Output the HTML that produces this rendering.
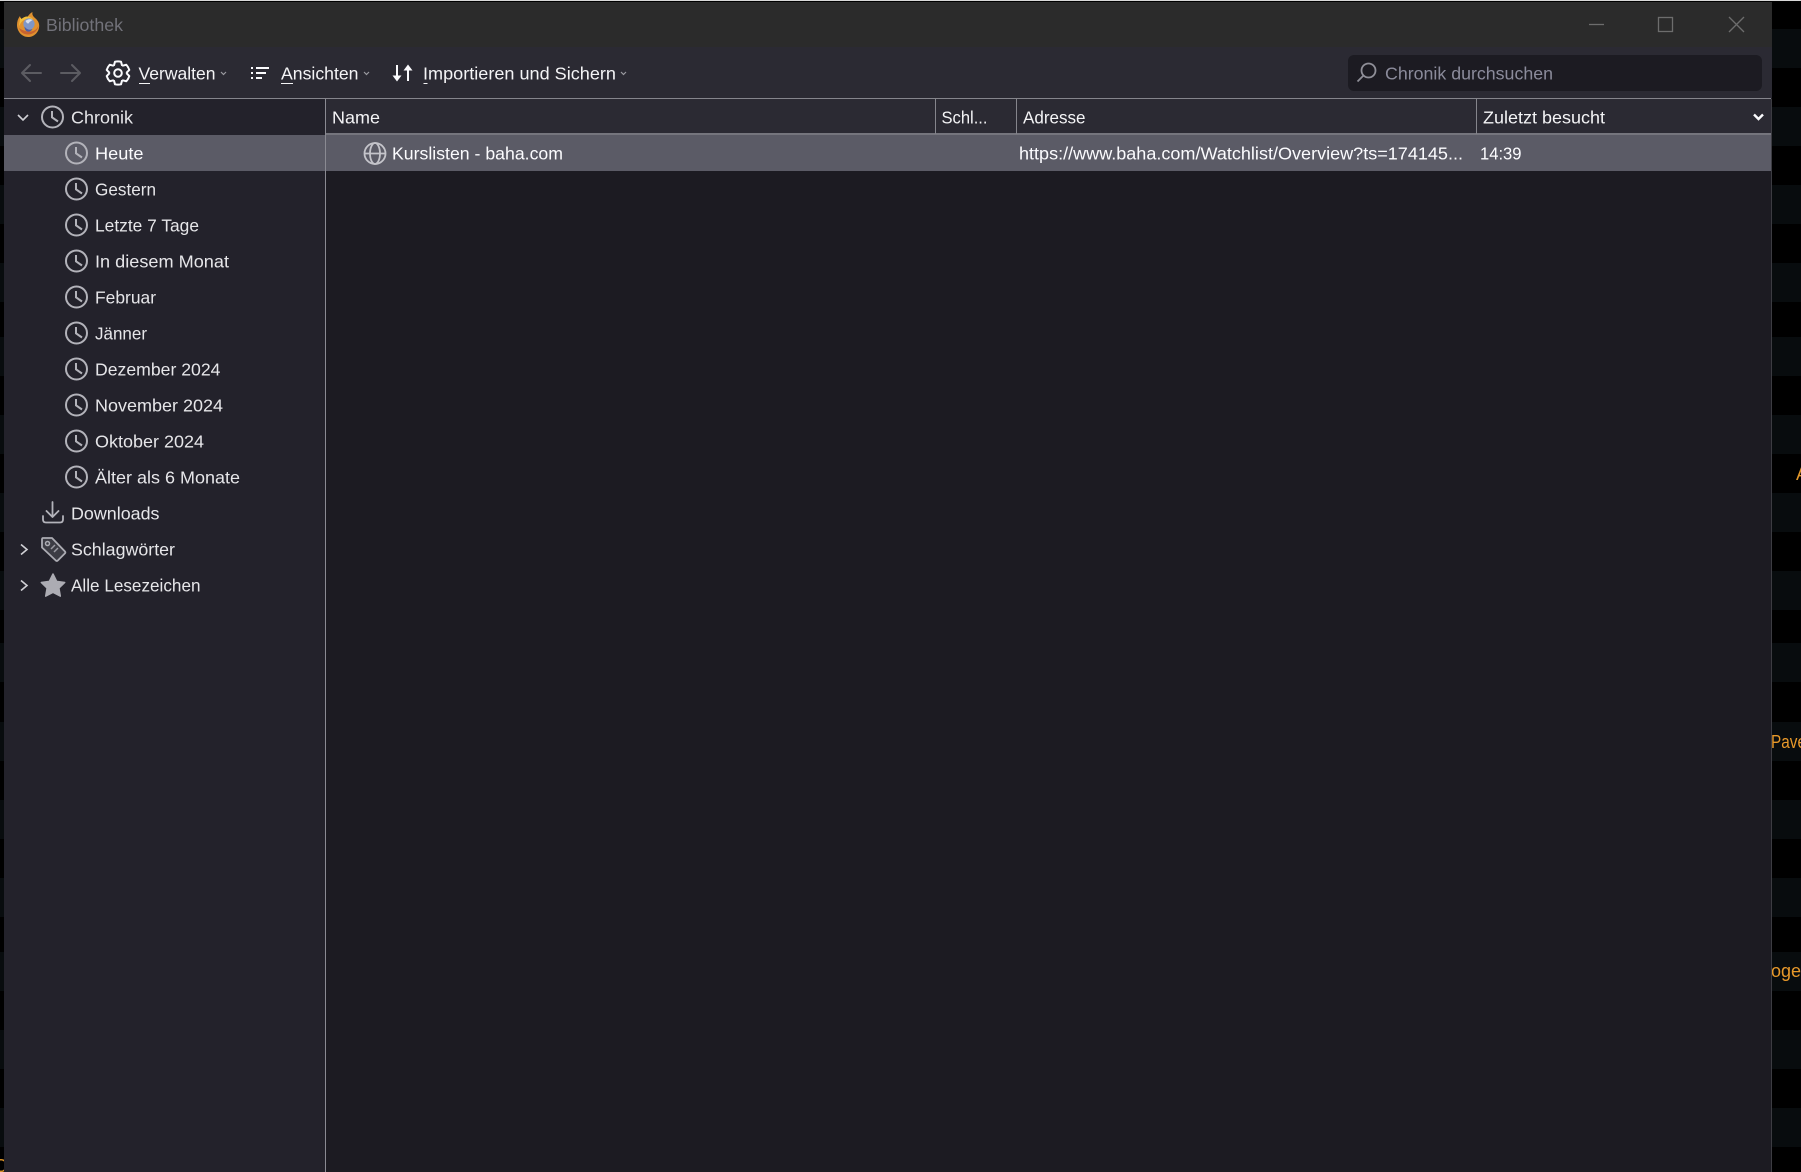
<!DOCTYPE html>
<html><head><meta charset="utf-8"><title>Bibliothek</title>
<style>
html,body{margin:0;padding:0;background:#000;width:1801px;height:1172px;overflow:hidden}
svg{display:block;position:absolute;left:0;top:0}
text{font-family:"Liberation Sans",sans-serif;font-size:17.5px;fill:#f4f4f6;white-space:pre}
.s{fill:#e6e6e9}
.c circle,.c path{fill:none;stroke:#b3b3ba;stroke-width:2}
</style></head><body>
<svg width="1801" height="1172" viewBox="0 0 1801 1172" xmlns="http://www.w3.org/2000/svg">
<defs>
<g id="clk" class="c"><circle cx="0" cy="0" r="10.5"/><path d="M-.5 -6V.3L5.5 4.5"/></g>
</defs>
<!-- background stripes -->
<rect width="1801" height="1172" fill="#000"/>
<g fill="#080c0e">
<rect y="29" width="1801" height="39"/><rect y="107" width="1801" height="39"/><rect y="185" width="1801" height="39"/><rect y="263" width="1801" height="39"/><rect y="337" width="1801" height="39"/><rect y="415" width="1801" height="39"/><rect y="493" width="1801" height="39"/><rect y="571" width="1801" height="39"/><rect y="643" width="1801" height="39"/><rect y="722" width="1801" height="39"/><rect y="800" width="1801" height="39"/><rect y="878" width="1801" height="39"/><rect y="952" width="1801" height="39"/><rect y="1030" width="1801" height="39"/><rect y="1108" width="1801" height="39"/>
</g>
<rect width="1801" height="1" fill="#d8d8d8"/>
<g>
<text x="1796" y="480" style="fill:#e0962a;font-size:18px">A</text>
<text x="1771" y="748" textLength="35" lengthAdjust="spacingAndGlyphs" style="fill:#e8992a;font-size:18px">Pave</text>
<text x="1771" y="977" style="fill:#e8992a;font-size:18px">oge</text>
<text x="-6" y="1172" style="fill:#e0962a;font-size:18px">O</text>
</g>
<!-- window -->
<rect x="4" y="2" width="1768" height="1170" fill="#1c1b22"/>
<rect x="4" y="2" width="1768" height="45" fill="#2b2b2b"/>
<rect x="4" y="47" width="1768" height="51" fill="#2b2a33"/>
<rect x="4" y="98" width="1767" height="1" fill="#85858c"/>
<rect x="4" y="99" width="321" height="1073" fill="#23222b"/>
<rect x="325" y="99" width="1" height="1073" fill="#8a8a92"/>
<rect x="1771" y="99" width="1" height="1073" fill="#3c3c42"/>
<!-- header -->
<rect x="326" y="99" width="1445" height="35" fill="#2b2a33"/>
<rect x="326" y="133" width="1445" height="2" fill="#75757d"/>
<rect x="935" y="99" width="1" height="35" fill="#85858c"/>
<rect x="1016" y="99" width="1" height="35" fill="#85858c"/>
<rect x="1476" y="99" width="1" height="35" fill="#85858c"/>
<!-- selection -->
<rect x="4" y="135" width="321" height="36" fill="#5b5b66"/>
<rect x="326" y="135" width="1445" height="36" fill="#5b5b66"/>
<!-- titlebar -->
<g>
<path d="M17 25c0-3.500 1-6.500 3-9 .2 1.500.8 2.500 1.800 3 1.700-1.600 3.800-2.400 6-2.500 1-1.700 2.700-3.500 4.700-4.500-.5 2.200.2 3.800 1.700 5.200 3 2.500 5 5 5 8.500 0 6.500-5.200 11.300-11.200 11.300S17 31.500 17 25z" fill="#e0912f"/>
<path d="M19 28c1.200 4 4.500 6.500 9 6.500 5 0 9.500-3.300 10.500-8.500-2 4-6 6.300-10.500 5.500-4-.6-6.500-1.800-9-3.500z" fill="#c8632f"/>
<path d="M20 17.500c.2 3-1 6-1 9 1-3 3-5.500 5-6.500 3-1.500 7-1.500 9.500 0-1.500-2.500-4-3.500-6-3.500-2.500 0-4.500 1-6 2.500z" fill="#f0bf3c"/>
<circle cx="29" cy="24" r="5.600" fill="#7f97c8"/>
<path d="M25.500 21c2-2 5-2.300 7-1-1 1-3 1.500-3.500 3-1 1-2 .5-3.500-2z" fill="#d7dfee"/>
<path d="M24.500 26.500c2 3 5 4 8 2.500-1 2-3 3-5 2.500-2-.5-3-2.500-3-5z" fill="#4d5ea6"/>
</g>
<text x="46" y="31" textLength="77" lengthAdjust="spacingAndGlyphs" style="fill:#72727a">Bibliothek</text>
<g fill="none" stroke="#6d6d6d" stroke-width="1.300">
<path d="M1589 24.500h15"/>
<rect x="1658.500" y="17.500" width="14" height="14"/>
<path d="M1729 17l15 15M1744 17l-15 15"/>
</g>
<!-- toolbar -->
<g fill="none" stroke="#5c5c62" stroke-width="2" stroke-linecap="round" stroke-linejoin="round">
<path d="M22 73h19M30 65l-8 8 8 8"/>
<path d="M61 73h19M72 65l8 8-8 8"/>
</g>
<g transform="translate(118 73)" fill="none" stroke="#fbfbfe" stroke-width="2" stroke-linejoin="round">
<circle r="3.800"/>
<path d="M-4.150-7.190L-3-11.300Q0-12 3-11.300L4.150-7.190"/>
<path d="M-4.150-7.190L-3-11.300Q0-12 3-11.300L4.150-7.190" transform="rotate(60)"/>
<path d="M-4.150-7.190L-3-11.300Q0-12 3-11.300L4.150-7.190" transform="rotate(120)"/>
<path d="M-4.150-7.190L-3-11.300Q0-12 3-11.300L4.150-7.190" transform="rotate(180)"/>
<path d="M-4.150-7.190L-3-11.300Q0-12 3-11.300L4.150-7.190" transform="rotate(240)"/>
<path d="M-4.150-7.190L-3-11.300Q0-12 3-11.300L4.150-7.190" transform="rotate(300)"/>
</g>
<text x="138.500" y="79.500" textLength="77" lengthAdjust="spacingAndGlyphs">Verwalten</text>
<rect x="139" y="83" width="11" height="1" fill="#f4f4f6"/>
<path d="M221 72l2.500 2.500 2.500-2.500M364 72l2.500 2.500 2.500-2.500M621 72l2.500 2.500 2.500-2.500" fill="none" stroke="#9a9aa0" stroke-width="1.200"/>
<g fill="#fbfbfe">
<rect x="251" y="67" width="2" height="2"/><rect x="251" y="72" width="2" height="2"/><rect x="251" y="77" width="2" height="2"/>
<rect x="256" y="67" width="13" height="2"/><rect x="256" y="72" width="10" height="2"/><rect x="256" y="77" width="6" height="2"/>
</g>
<text x="281" y="79.500" textLength="77.500" lengthAdjust="spacingAndGlyphs">Ansichten</text>
<rect x="281" y="83" width="12" height="1" fill="#f4f4f6"/>
<g fill="#fbfbfe">
<rect x="396" y="65" width="2" height="13"/><path d="M392.500 75.500h9L397 81.500z"/>
<rect x="407" y="68" width="2" height="13"/><path d="M403.500 70.500h9L408 64.500z"/>
</g>
<text x="423" y="79.500" textLength="193" lengthAdjust="spacingAndGlyphs">Importieren und Sichern</text>
<rect x="423.500" y="83" width="4" height="1" fill="#f4f4f6"/>
<!-- search -->
<rect x="1348" y="55" width="414" height="36" rx="6" fill="#1c1b22"/>
<g fill="none" stroke="#8f8f98" stroke-width="1.800"><circle cx="1368.500" cy="70.500" r="7"/><path d="M1363.500 75.500l-6 6"/></g>
<text x="1385" y="79.500" textLength="168" lengthAdjust="spacingAndGlyphs" style="fill:#8b8b9b">Chronik durchsuchen</text>
<!-- tree -->
<path d="M18 115l5 5 5-5" fill="none" stroke="#d0d0d5" stroke-width="1.600"/>
<use href="#clk" x="52.500" y="117"/>
<text class="s" x="71" y="123.500" textLength="62" lengthAdjust="spacingAndGlyphs">Chronik</text>
<use href="#clk" x="76.500" y="153"/><text x="95" y="159.500" textLength="48.500" lengthAdjust="spacingAndGlyphs" style="fill:#fbfbfe">Heute</text>
<use href="#clk" x="76.500" y="189"/><text class="s" x="95" y="195.500" textLength="61" lengthAdjust="spacingAndGlyphs">Gestern</text>
<use href="#clk" x="76.500" y="225"/><text class="s" x="95" y="231.500" textLength="104" lengthAdjust="spacingAndGlyphs">Letzte 7 Tage</text>
<use href="#clk" x="76.500" y="261"/><text class="s" x="95" y="267.500" textLength="134" lengthAdjust="spacingAndGlyphs">In diesem Monat</text>
<use href="#clk" x="76.500" y="297"/><text class="s" x="95" y="303.500" textLength="61" lengthAdjust="spacingAndGlyphs">Februar</text>
<use href="#clk" x="76.500" y="333"/><text class="s" x="95" y="339.500" textLength="52" lengthAdjust="spacingAndGlyphs">Jänner</text>
<use href="#clk" x="76.500" y="369"/><text class="s" x="95" y="375.500" textLength="125.500" lengthAdjust="spacingAndGlyphs">Dezember 2024</text>
<use href="#clk" x="76.500" y="405"/><text class="s" x="95" y="411.500" textLength="128" lengthAdjust="spacingAndGlyphs">November 2024</text>
<use href="#clk" x="76.500" y="441"/><text class="s" x="95" y="447.500" textLength="109" lengthAdjust="spacingAndGlyphs">Oktober 2024</text>
<use href="#clk" x="76.500" y="477"/><text class="s" x="95" y="483.500" textLength="145" lengthAdjust="spacingAndGlyphs">Älter als 6 Monate</text>
<g fill="none" stroke="#b3b3ba" stroke-width="1.800" stroke-linecap="round" stroke-linejoin="round">
<path d="M52.500 502v15M46.500 511l6 6 6-6"/>
<path d="M43 516v3.500q0 3 3 3h14q3 0 3-3V516"/>
</g>
<text class="s" x="71" y="519.500" textLength="88.500" lengthAdjust="spacingAndGlyphs">Downloads</text>
<path d="M21 544.500l6 5-6 5M21 580.500l6 5-6 5" fill="none" stroke="#d0d0d5" stroke-width="1.600"/>
<path d="M43 538h9l13 13.500q.8 1-.2 2l-7 7q-1 1-2 0L42 547.500v-8q0-1.500 1-1.500z" fill="#3c3c44" stroke="#acacb3" stroke-width="1.800" stroke-linejoin="round"/>
<circle cx="47.500" cy="543.500" r="2" fill="none" stroke="#acacb3" stroke-width="1.500"/>
<path d="M51 549l4-4M54 552l4-4" stroke="#9a9aa2" stroke-width="1.500" fill="none"/>
<text class="s" x="71" y="555.500" textLength="104" lengthAdjust="spacingAndGlyphs">Schlagwörter</text>
<path d="M53 574l3.700 7.400 8 1.100-5.800 5.600 1.400 8-7.300-3.800-7.300 3.800 1.400-8-5.800-5.600 8-1.100z" fill="#acacb3" stroke="#acacb3" stroke-width="1.500" stroke-linejoin="round"/>
<text class="s" x="71" y="591.500" textLength="129.500" lengthAdjust="spacingAndGlyphs">Alle Lesezeichen</text>
<!-- header text -->
<text x="332" y="123.500" textLength="48" lengthAdjust="spacingAndGlyphs">Name</text>
<text x="941.500" y="123.500" textLength="46" lengthAdjust="spacingAndGlyphs">Schl...</text>
<text x="1023" y="123.500" textLength="62.500" lengthAdjust="spacingAndGlyphs">Adresse</text>
<text x="1483" y="123.500" textLength="122" lengthAdjust="spacingAndGlyphs">Zuletzt besucht</text>
<path d="M1754 114.500l4.500 4.500 4.500-4.500" fill="none" stroke="#fbfbfe" stroke-width="2.400"/>
<!-- row -->
<g fill="none" stroke="#c4c4ca" stroke-width="1.800">
<circle cx="375" cy="153.500" r="10.500"/>
<ellipse cx="375" cy="153.500" rx="5" ry="10.500"/>
<path d="M365 153.500h20"/>
</g>
<text x="392" y="159.500" textLength="171" lengthAdjust="spacingAndGlyphs" style="fill:#fbfbfe">Kurslisten - baha.com</text>
<text x="1019" y="159.500" textLength="444" lengthAdjust="spacingAndGlyphs" style="fill:#fbfbfe">https://www.baha.com/Watchlist/Overview?ts=174145...</text>
<text x="1480" y="159.500" textLength="41.500" lengthAdjust="spacingAndGlyphs" style="fill:#fbfbfe">14:39</text>
</svg>
</body></html>
